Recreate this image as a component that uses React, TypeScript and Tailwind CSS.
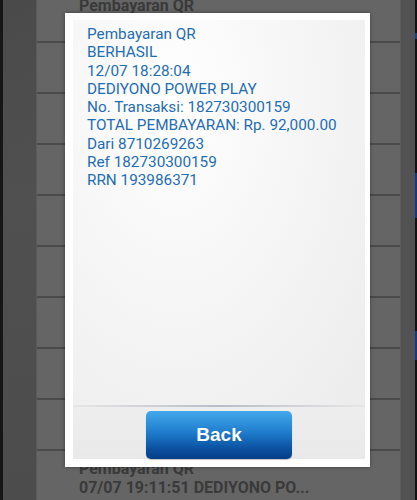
import React from "react";

const receiptLines = [
  "Pembayaran QR",
  "BERHASIL",
  "12/07 18:28:04",
  "DEDIYONO POWER PLAY",
  "No. Transaksi: 182730300159",
  "TOTAL PEMBAYARAN: Rp. 92,000.00",
  "Dari 8710269263",
  "Ref 182730300159",
  "RRN 193986371",
];

// rows hidden behind the dialog carry no visible text
const historyRows = [
  { title: "", detail: "" },
  { title: "", detail: "" },
  { title: "", detail: "" },
  { title: "", detail: "" },
  { title: "", detail: "" },
  { title: "", detail: "" },
  { title: "", detail: "" },
  { title: "", detail: "" },
  { title: "Pembayaran QR", detail: "07/07 19:11:51 DEDIYONO PO..." },
];

function HistoryList() {
  return (
    <div className="flex-1 flex flex-col bg-[#656565] border-l border-[#5a5a5a] font-['Roboto',sans-serif] font-bold text-[16px] leading-[18px] text-[#3a3a3a]">
      {/* first row is cut off by the top of the screen */}
      <div className="h-[44px] shrink-0 border-b-2 border-[#4a4a4a] pl-[42px] -mt-px overflow-hidden">
        <div className="-mt-[2px]">Pembayaran QR</div>
      </div>
      {historyRows.map((row, i) => (
        <div
          key={i}
          className="h-[51px] shrink-0 border-b-2 border-[#4a4a4a] pl-[42px] pt-[9px]"
        >
          {row.title ? <div>{row.title}</div> : null}
          {row.detail ? <div className="mt-[1px]">{row.detail}</div> : null}
        </div>
      ))}
    </div>
  );
}

function ReceiptDialog() {
  return (
    <div className="absolute left-[65px] top-[13px] w-[305px] h-[454px] bg-white pl-[8px] pr-[5px] pt-[7px] pb-[8px] shadow-[0_0_4px_rgba(0,0,0,0.35)]">
      <div className="flex flex-col h-full">
        <div className="flex-1 bg-[radial-gradient(ellipse_at_35%_20%,#ffffff_0%,#f6f6f6_45%,#ececec_100%)] pl-[14px] pt-[5px] font-['Roboto',sans-serif] text-[15.3px] leading-[18.25px] text-[#1f6db4]">
          {receiptLines.map((line) => (
            <div key={line}>{line}</div>
          ))}
        </div>
        <div className="h-[2px] bg-[linear-gradient(to_right,#e6e6e6,#b9bdc6_50%,#e6e6e6)]" />
        <div className="h-[52px] bg-[linear-gradient(to_bottom,#eeeeee,#e9e9e9)] flex justify-center pt-[4px]">
          <button
            type="button"
            className="w-[146px] h-[48px] rounded-[5px] bg-[linear-gradient(to_bottom,#43a9ec_0%,#1f7ccc_45%,#0a4f9f_80%,#063d86_100%)] text-white font-['Liberation_Sans',Arial,sans-serif] font-bold text-[19px] shadow-[0_1px_1px_rgba(0,0,0,0.25)]"
          >
            Back
          </button>
        </div>
      </div>
    </div>
  );
}

export default function App() {
  return (
    <div className="relative w-[417px] h-[500px] overflow-hidden flex bg-[#141414]">
      <div className="w-[3px] shrink-0 bg-[#161616]" />
      <div className="w-[33px] shrink-0 bg-[linear-gradient(160deg,#4a4a4a,#505050_40%,#4c4c4c)]" />
      <HistoryList />
      <div className="w-[15px] shrink-0 bg-[#525252] border-l border-[#5c5c5c]" />
      <div className="w-[2px] shrink-0 flex flex-col bg-[#121212]">
        <div className="h-[33px]" />
        <div className="h-[6px] bg-[#1a3f78]" />
        <div className="h-[134px]" />
        <div className="h-[45px] bg-[#123a7a]" />
        <div className="h-[113px]" />
        <div className="h-[29px] bg-[#123a7a]" />
      </div>
      <ReceiptDialog />
    </div>
  );
}
